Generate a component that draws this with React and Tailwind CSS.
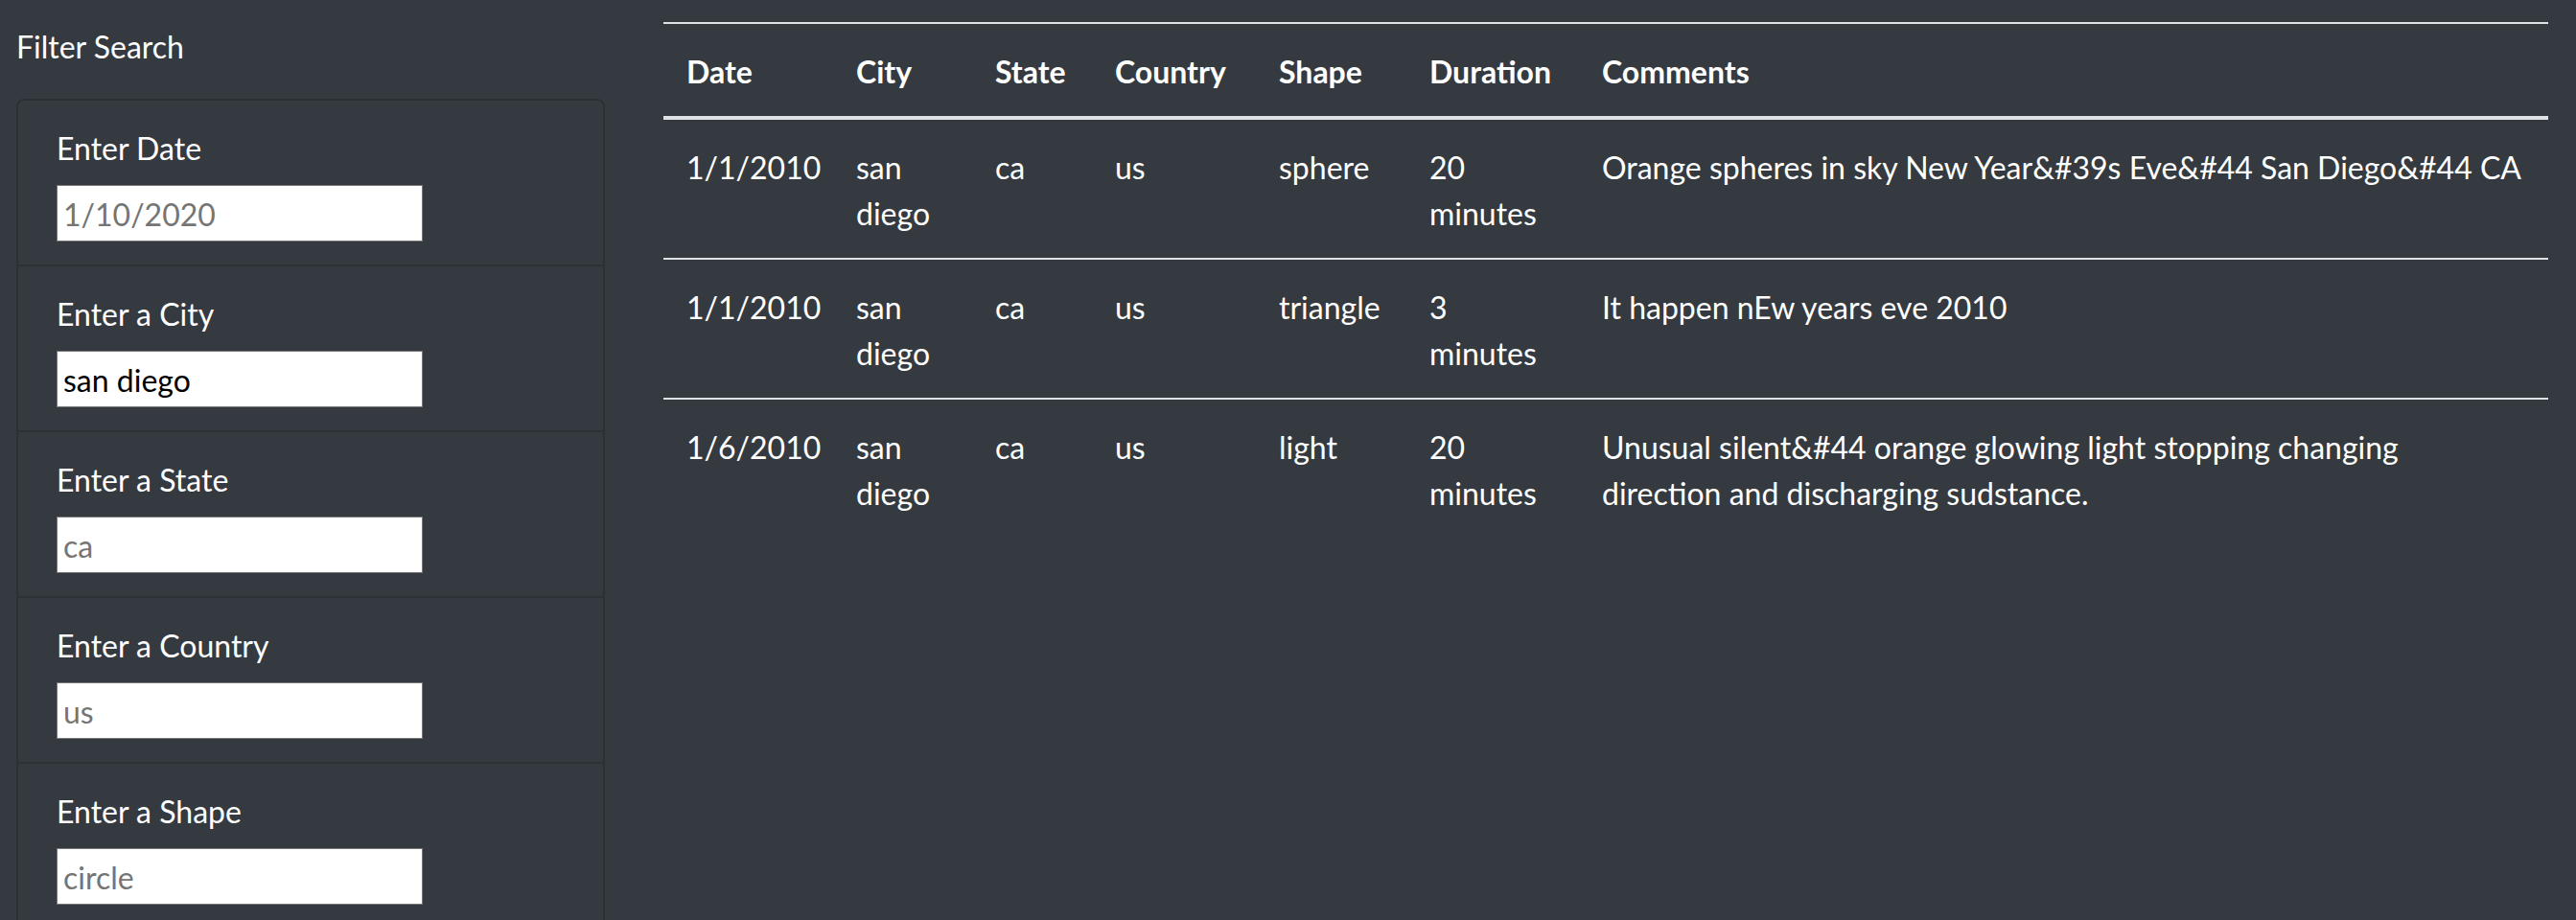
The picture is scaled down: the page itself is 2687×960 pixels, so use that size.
import React from 'react';

const filters = [
  { id: 'datetime', label: 'Enter Date', placeholder: '1/10/2020' },
  { id: 'city', label: 'Enter a City', placeholder: 'los angeles', value: 'san diego' },
  { id: 'state', label: 'Enter a State', placeholder: 'ca' },
  { id: 'country', label: 'Enter a Country', placeholder: 'us' },
  { id: 'shape', label: 'Enter a Shape', placeholder: 'circle' },
];

const sightings = [
  {
    datetime: '1/1/2010',
    city: 'san diego',
    state: 'ca',
    country: 'us',
    shape: 'sphere',
    duration: '20 minutes',
    comments: 'Orange spheres in sky New Year&#39s Eve&#44 San Diego&#44 CA',
  },
  {
    datetime: '1/1/2010',
    city: 'san diego',
    state: 'ca',
    country: 'us',
    shape: 'triangle',
    duration: '3 minutes',
    comments: 'It happen nEw years eve 2010',
  },
  {
    datetime: '1/6/2010',
    city: 'san diego',
    state: 'ca',
    country: 'us',
    shape: 'light',
    duration: '20 minutes',
    comments: 'Unusual silent&#44 orange glowing light stopping changing direction and discharging sudstance.',
  },
];

const columns = ['Date', 'City', 'State', 'Country', 'Shape', 'Duration', 'Comments'];

function FilterItem({ filter, first }) {
  return (
    <li className={`px-[40px] pt-[26px] pb-[24px] ${first ? '' : 'border-t-2 border-[#2c3136]'}`}>
      <label htmlFor={filter.id} className="block mb-[14px]">
        {filter.label}
      </label>
      <input
        id={filter.id}
        type="text"
        defaultValue={filter.value}
        placeholder={filter.placeholder}
        className="block w-[382px] h-[59px] bg-white text-black border border-[#767676] pl-[6px] pt-[2px] text-[32px] placeholder:text-[#757575] outline-none"
      />
    </li>
  );
}

export default function App() {
  return (
    <div className="min-h-screen bg-[#343a40] text-white font-['Lato',sans-serif] text-[32px] leading-[48px] flex pl-[17px] pr-[29px] pt-[23px]">
      <aside className="w-[614px] shrink-0">
        <h2 className="pt-[2px] mb-[30px]">Filter Search</h2>
        <div className="rounded-[8px] border-2 border-[#2c3136]">
          <ul>
            {filters.map((f, i) => (
              <FilterItem key={f.id} filter={f} first={i === 0} />
            ))}
          </ul>
        </div>
      </aside>

      <main className="flex-1 ml-[61px]">
        <table className="w-full table-fixed border-separate border-spacing-0">
          <colgroup>
            <col className="w-[177px]" />
            <col className="w-[145px]" />
            <col className="w-[125px]" />
            <col className="w-[171px]" />
            <col className="w-[157px]" />
            <col className="w-[180px]" />
            <col />
          </colgroup>
          <thead>
            <tr>
              {columns.map((c) => (
                <th
                  key={c}
                  className="text-left font-bold px-[24px] pt-[26px] pb-[22px] border-t-2 border-b-4 border-[#dee2e6] align-bottom"
                >
                  {c}
                </th>
              ))}
            </tr>
          </thead>
          <tbody>
            {sightings.map((s, i) => (
              <tr key={i}>
                {[s.datetime, s.city, s.state, s.country, s.shape, s.duration, s.comments].map((v, j) => (
                  <td
                    key={j}
                    className={`px-[24px] pt-[26px] pb-[22px] align-top ${i === 0 ? '' : 'border-t-2 border-[#dee2e6]'}`}
                  >
                    {v}
                  </td>
                ))}
              </tr>
            ))}
          </tbody>
        </table>
      </main>
    </div>
  );
}
